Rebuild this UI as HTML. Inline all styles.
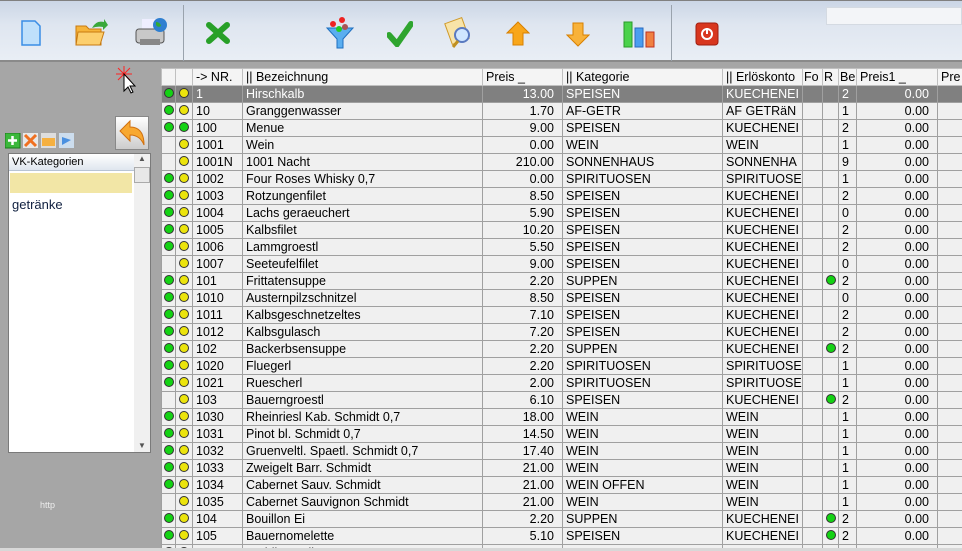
<!DOCTYPE html>
<html><head><meta charset="utf-8"><style>
*{margin:0;padding:0;box-sizing:border-box}
body{width:962px;height:551px;overflow:hidden;background:#a6a6a6;font-family:"Liberation Sans",Tahoma,sans-serif;position:relative}
#tb{position:absolute;left:0;top:0;width:962px;height:62px;background:linear-gradient(#cbd6e6,#dfe6f0 40%,#e9eef5);border-top:1px solid #808080;border-bottom:2px solid #8a8a8a}
.sep{position:absolute;top:4px;width:1px;height:56px;background:#9aa3ad}
.ic{position:absolute}
#search{position:absolute;left:826px;top:6px;width:136px;height:18px;background:#f3f5f8;border:1px solid #d4dae2}
#grid{position:absolute;left:161px;top:68px;width:801px;height:483px;background:#f0f0f0;overflow:hidden}
table{border-collapse:collapse;table-layout:fixed;font-size:12.5px;color:#000;width:806px}
td{height:17px;border:1px solid #a0a0a0;padding:0 3px;white-space:nowrap;overflow:hidden;line-height:15px;background:#f0f0f0}
tr.h td{background:#f4f4f4;border-color:#c0c0c0}
tr.sel td{background:#808080;color:#fff}
td.r{text-align:right;padding-right:8px}
td.d{padding:0;text-align:center}
.g,.y{display:inline-block;width:10px;height:10px;border-radius:50%;border:1px solid #333;vertical-align:middle;margin-top:-2px}
.g{background:#14d214}.y{background:#ece40c}
#lb{position:absolute;left:8px;top:153px;width:143px;height:300px;background:#fff;border:1px solid #7a7a7a}
</style></head><body>
<div id="tb">
<svg class="ic" style="left:20px;top:19px" width="22" height="26"><path d="M2 1h13l5 5v19H2z" fill="#bfe0fb" stroke="#3a8ee6" stroke-width="1.5"/></svg>
<svg class="ic" style="left:74px;top:17px" width="34" height="30"><path d="M2 8h10l3 3h12v16H2z" fill="#f6b43a" stroke="#c87a10"/><path d="M4 14h26l-4 13H2z" fill="#fccf6e" stroke="#c87a10"/><path d="M18 10q4-8 12-6l0-3 4 6-5 5 0-3q-6-1-11 1z" fill="#3aa83a"/></svg>
<svg class="ic" style="left:134px;top:16px" width="34" height="32"><rect x="8" y="2" width="14" height="12" fill="#eef"/><rect x="2" y="12" width="28" height="14" rx="3" fill="#c8c8c8" stroke="#555"/><rect x="6" y="22" width="20" height="6" fill="#888"/><circle cx="26" cy="8" r="7" fill="#2f7fd0"/><path d="M22 5q4 0 5 4-3 2-5-1z" fill="#3a3"/></svg>
<div class="sep" style="left:183px"></div>
<svg class="ic" style="left:206px;top:21px" width="24" height="22"><path d="M3 3l18 16M21 3L3 19" stroke="#28a028" stroke-width="6" stroke-linecap="round"/></svg>
<svg class="ic" style="left:325px;top:15px" width="30" height="34"><path d="M2 12h26l-10 11v9h-6v-9z" fill="#5aaef0" stroke="#1f6fc0"/><circle cx="8" cy="8" r="3" fill="#e22"/><circle cx="17" cy="4" r="3" fill="#e22"/><circle cx="14" cy="13" r="3" fill="#2c2"/><circle cx="20" cy="11" r="3" fill="#a55"/></svg>
<svg class="ic" style="left:387px;top:20px" width="26" height="26"><path d="M2 14l8 9L24 3" fill="none" stroke="#2fa52f" stroke-width="6" stroke-linecap="round"/></svg>
<svg class="ic" style="left:444px;top:15px" width="30" height="34"><rect x="4" y="4" width="18" height="22" fill="#f8e4a8" stroke="#d09a2a" transform="rotate(-20 13 15)"/><circle cx="18" cy="19" r="7" fill="#cfe6ff" stroke="#5a7ac0" stroke-width="2"/><path d="M14 25l-5 6" stroke="#c09020" stroke-width="3"/></svg>
<svg class="ic" style="left:506px;top:20px" width="24" height="26"><path d="M12 1L23 12h-6v12H7V12H1z" fill="#f8a61a" stroke="#d88000"/></svg>
<svg class="ic" style="left:566px;top:20px" width="24" height="26"><path d="M12 25L23 14h-6V2H7v12H1z" fill="#f8b23a" stroke="#d88000"/></svg>
<svg class="ic" style="left:623px;top:20px" width="34" height="27"><rect x="1" y="1" width="8" height="25" fill="#4bd24b" stroke="#2a9a2a"/><rect x="12" y="7" width="8" height="19" fill="#4a9ef0" stroke="#2a6ac0"/><rect x="23" y="11" width="8" height="15" fill="#f08040" stroke="#c03020"/></svg>
<div class="sep" style="left:671px"></div>
<svg class="ic" style="left:695px;top:21px" width="24" height="24"><rect x="1" y="1" width="22" height="22" rx="3" fill="#d8361e" stroke="#a01e10"/><circle cx="12" cy="12" r="5" fill="none" stroke="#fff" stroke-width="2"/><path d="M12 6v6" stroke="#fff" stroke-width="2"/></svg>
<div id="search"></div>
</div>
<svg class="ic" style="left:114px;top:66px" width="24" height="30"><path d="M2 8h16M10 0v16M4 2l12 12M16 2L4 14" stroke="#f22" stroke-width="1"/><path d="M10 8v17l4-4 3 6 2-1-3-6h5z" fill="#fff" stroke="#000"/></svg>
<svg class="ic" style="left:5px;top:133px" width="70" height="16"><rect x="0" y="0" width="15" height="15" fill="#3bb83b" stroke="#1a7a1a"/><path d="M7.5 3v9M3 7.5h9" stroke="#fff" stroke-width="2.5"/><rect x="18" y="0" width="15" height="15" fill="#e8e8e8"/><path d="M20 2l11 11M31 2L20 13" stroke="#f07020" stroke-width="3"/><rect x="36" y="0" width="15" height="15" fill="#ddd"/><path d="M37 5h13v8H37z" fill="#f5b040"/><rect x="54" y="0" width="15" height="15" fill="#cde"/><path d="M57 4l9 3-9 5z" fill="#4a90e0"/></svg>
<div style="position:absolute;left:115px;top:116px;width:34px;height:34px;background:linear-gradient(#fff,#ccc);border:1px solid #888"><svg width="32" height="32"><path d="M4 14L14 4v6q14 0 14 18q-4-10-14-10v6z" fill="#f8a830" stroke="#d07010"/></svg></div>
<div id="lb">
<div style="height:17px;background:linear-gradient(#fff,#dfe6ef);border-bottom:1px solid #b8c4d4;font-size:11px;padding:2px 3px;width:125px">VK-Kategorien</div>
<div style="position:absolute;left:1px;top:19px;width:122px;height:20px;background:#f2e6a6"></div>
<div style="position:absolute;left:3px;top:43px;font-size:13px;color:#102040">getränke</div>
<div style="position:absolute;right:0;top:0;width:16px;height:298px;background:#f0f0f0"><div style="font-size:8px;text-align:center;color:#555">▲</div><div style="margin-top:4px;height:16px;background:#e8e8e8;border:1px solid #aaa"></div><div style="position:absolute;bottom:2px;width:16px;font-size:8px;text-align:center;color:#555">▼</div></div>
</div>
<div style="position:absolute;left:40px;top:500px;font-size:9px;color:#eee">http</div>
<div id="grid"><table>
<colgroup><col style="width:14px"><col style="width:17px"><col style="width:50px"><col style="width:240px"><col style="width:80px"><col style="width:160px"><col style="width:80px"><col style="width:20px"><col style="width:16px"><col style="width:18px"><col style="width:81px"><col style="width:30px"></colgroup>
<tr class="h"><td></td><td></td><td>-&gt; NR.</td><td>|| Bezeichnung</td><td>Preis _</td><td>|| Kategorie</td><td>|| Erlöskonto</td><td style="padding:0 1px">Fo</td><td style="padding:0 1px">R</td><td style="padding:0 1px">Be</td><td>Preis1 _</td><td>Pre</td></tr>
<tr class="sel"><td class="d"><i class="g"></i></td><td class="d"><i class="y"></i></td><td>1</td><td>Hirschkalb</td><td class="r">13.00</td><td>SPEISEN</td><td>KUECHENEI</td><td></td><td></td><td>2</td><td class="r">0.00</td><td></td></tr>
<tr><td class="d"><i class="g"></i></td><td class="d"><i class="y"></i></td><td>10</td><td>Granggenwasser</td><td class="r">1.70</td><td>AF-GETR</td><td>AF GETRäN</td><td></td><td></td><td>1</td><td class="r">0.00</td><td></td></tr>
<tr><td class="d"><i class="g"></i></td><td class="d"><i class="g"></i></td><td>100</td><td>Menue</td><td class="r">9.00</td><td>SPEISEN</td><td>KUECHENEI</td><td></td><td></td><td>2</td><td class="r">0.00</td><td></td></tr>
<tr><td></td><td class="d"><i class="y"></i></td><td>1001</td><td>Wein</td><td class="r">0.00</td><td>WEIN</td><td>WEIN</td><td></td><td></td><td>1</td><td class="r">0.00</td><td></td></tr>
<tr><td></td><td class="d"><i class="y"></i></td><td>1001N</td><td>1001 Nacht</td><td class="r">210.00</td><td>SONNENHAUS</td><td>SONNENHA</td><td></td><td></td><td>9</td><td class="r">0.00</td><td></td></tr>
<tr><td class="d"><i class="g"></i></td><td class="d"><i class="y"></i></td><td>1002</td><td>Four Roses Whisky 0,7</td><td class="r">0.00</td><td>SPIRITUOSEN</td><td>SPIRITUOSE</td><td></td><td></td><td>1</td><td class="r">0.00</td><td></td></tr>
<tr><td class="d"><i class="g"></i></td><td class="d"><i class="y"></i></td><td>1003</td><td>Rotzungenfilet</td><td class="r">8.50</td><td>SPEISEN</td><td>KUECHENEI</td><td></td><td></td><td>2</td><td class="r">0.00</td><td></td></tr>
<tr><td class="d"><i class="g"></i></td><td class="d"><i class="y"></i></td><td>1004</td><td>Lachs geraeuchert</td><td class="r">5.90</td><td>SPEISEN</td><td>KUECHENEI</td><td></td><td></td><td>0</td><td class="r">0.00</td><td></td></tr>
<tr><td class="d"><i class="g"></i></td><td class="d"><i class="y"></i></td><td>1005</td><td>Kalbsfilet</td><td class="r">10.20</td><td>SPEISEN</td><td>KUECHENEI</td><td></td><td></td><td>2</td><td class="r">0.00</td><td></td></tr>
<tr><td class="d"><i class="g"></i></td><td class="d"><i class="y"></i></td><td>1006</td><td>Lammgroestl</td><td class="r">5.50</td><td>SPEISEN</td><td>KUECHENEI</td><td></td><td></td><td>2</td><td class="r">0.00</td><td></td></tr>
<tr><td></td><td class="d"><i class="y"></i></td><td>1007</td><td>Seeteufelfilet</td><td class="r">9.00</td><td>SPEISEN</td><td>KUECHENEI</td><td></td><td></td><td>0</td><td class="r">0.00</td><td></td></tr>
<tr><td class="d"><i class="g"></i></td><td class="d"><i class="y"></i></td><td>101</td><td>Frittatensuppe</td><td class="r">2.20</td><td>SUPPEN</td><td>KUECHENEI</td><td></td><td class="d"><i class="g"></i></td><td>2</td><td class="r">0.00</td><td></td></tr>
<tr><td class="d"><i class="g"></i></td><td class="d"><i class="y"></i></td><td>1010</td><td>Austernpilzschnitzel</td><td class="r">8.50</td><td>SPEISEN</td><td>KUECHENEI</td><td></td><td></td><td>0</td><td class="r">0.00</td><td></td></tr>
<tr><td class="d"><i class="g"></i></td><td class="d"><i class="y"></i></td><td>1011</td><td>Kalbsgeschnetzeltes</td><td class="r">7.10</td><td>SPEISEN</td><td>KUECHENEI</td><td></td><td></td><td>2</td><td class="r">0.00</td><td></td></tr>
<tr><td class="d"><i class="g"></i></td><td class="d"><i class="y"></i></td><td>1012</td><td>Kalbsgulasch</td><td class="r">7.20</td><td>SPEISEN</td><td>KUECHENEI</td><td></td><td></td><td>2</td><td class="r">0.00</td><td></td></tr>
<tr><td class="d"><i class="g"></i></td><td class="d"><i class="y"></i></td><td>102</td><td>Backerbsensuppe</td><td class="r">2.20</td><td>SUPPEN</td><td>KUECHENEI</td><td></td><td class="d"><i class="g"></i></td><td>2</td><td class="r">0.00</td><td></td></tr>
<tr><td class="d"><i class="g"></i></td><td class="d"><i class="y"></i></td><td>1020</td><td>Fluegerl</td><td class="r">2.20</td><td>SPIRITUOSEN</td><td>SPIRITUOSE</td><td></td><td></td><td>1</td><td class="r">0.00</td><td></td></tr>
<tr><td class="d"><i class="g"></i></td><td class="d"><i class="y"></i></td><td>1021</td><td>Ruescherl</td><td class="r">2.00</td><td>SPIRITUOSEN</td><td>SPIRITUOSE</td><td></td><td></td><td>1</td><td class="r">0.00</td><td></td></tr>
<tr><td></td><td class="d"><i class="y"></i></td><td>103</td><td>Bauerngroestl</td><td class="r">6.10</td><td>SPEISEN</td><td>KUECHENEI</td><td></td><td class="d"><i class="g"></i></td><td>2</td><td class="r">0.00</td><td></td></tr>
<tr><td class="d"><i class="g"></i></td><td class="d"><i class="y"></i></td><td>1030</td><td>Rheinriesl Kab. Schmidt 0,7</td><td class="r">18.00</td><td>WEIN</td><td>WEIN</td><td></td><td></td><td>1</td><td class="r">0.00</td><td></td></tr>
<tr><td class="d"><i class="g"></i></td><td class="d"><i class="y"></i></td><td>1031</td><td>Pinot bl. Schmidt 0,7</td><td class="r">14.50</td><td>WEIN</td><td>WEIN</td><td></td><td></td><td>1</td><td class="r">0.00</td><td></td></tr>
<tr><td class="d"><i class="g"></i></td><td class="d"><i class="y"></i></td><td>1032</td><td>Gruenveltl. Spaetl. Schmidt 0,7</td><td class="r">17.40</td><td>WEIN</td><td>WEIN</td><td></td><td></td><td>1</td><td class="r">0.00</td><td></td></tr>
<tr><td class="d"><i class="g"></i></td><td class="d"><i class="y"></i></td><td>1033</td><td>Zweigelt Barr. Schmidt</td><td class="r">21.00</td><td>WEIN</td><td>WEIN</td><td></td><td></td><td>1</td><td class="r">0.00</td><td></td></tr>
<tr><td class="d"><i class="g"></i></td><td class="d"><i class="y"></i></td><td>1034</td><td>Cabernet Sauv. Schmidt</td><td class="r">21.00</td><td>WEIN OFFEN</td><td>WEIN</td><td></td><td></td><td>1</td><td class="r">0.00</td><td></td></tr>
<tr><td></td><td class="d"><i class="y"></i></td><td>1035</td><td>Cabernet Sauvignon Schmidt</td><td class="r">21.00</td><td>WEIN</td><td>WEIN</td><td></td><td></td><td>1</td><td class="r">0.00</td><td></td></tr>
<tr><td class="d"><i class="g"></i></td><td class="d"><i class="y"></i></td><td>104</td><td>Bouillon Ei</td><td class="r">2.20</td><td>SUPPEN</td><td>KUECHENEI</td><td></td><td class="d"><i class="g"></i></td><td>2</td><td class="r">0.00</td><td></td></tr>
<tr><td class="d"><i class="g"></i></td><td class="d"><i class="y"></i></td><td>105</td><td>Bauernomelette</td><td class="r">5.10</td><td>SPEISEN</td><td>KUECHENEI</td><td></td><td class="d"><i class="g"></i></td><td>2</td><td class="r">0.00</td><td></td></tr>
<tr><td class="d"><i class="g"></i></td><td class="d"><i class="y"></i></td><td>1050</td><td>Frühlingsrolle</td><td class="r">1.70</td><td>AF-GETR</td><td>AF GETRäN</td><td></td><td></td><td>1</td><td class="r">0.00</td><td></td></tr>
</table></div>
<div style="position:absolute;left:0;top:548px;width:962px;height:3px;background:#d8d8d8"></div>
</body></html>
